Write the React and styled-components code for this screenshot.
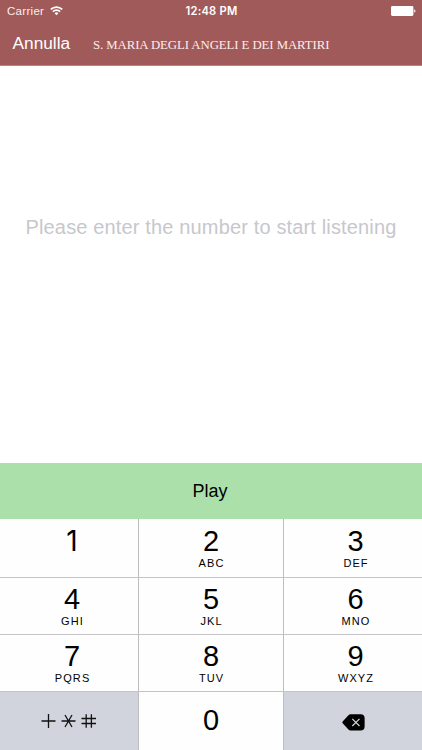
import React from "react";
import styled, { createGlobalStyle } from "styled-components";

const GlobalStyle = createGlobalStyle`
  *, *::before, *::after { box-sizing: border-box; }
  html, body { margin: 0; padding: 0; background: #fff; }
  button { border: 0; margin: 0; font: inherit; color: inherit; background: none; }
`;

const Screen = styled.div`
  width: 422px;
  height: 750px;
  display: flex;
  flex-direction: column;
  overflow: hidden;
  background: #fff;
  color: #000;
  font-family: "Liberation Sans", Arial, sans-serif;
`;

const Header = styled.header`
  height: 66px;
  flex: none;
  color: #fff;
  background: #a15a5a;
  border-bottom: 1px solid #b98484;
`;

const StatusBar = styled.div`
  height: 22px;
  display: grid;
  grid-template-columns: 1fr auto 1fr;
  align-items: center;
  padding: 0 6px 0 7px;
  font-size: 11.5px;
  line-height: 22px;
`;

const Carrier = styled.div`
  display: flex;
  align-items: center;
  gap: 6px;
  color: #fbeeee;
  letter-spacing: 0.3px;
`;

const Clock = styled.div`
  font-family: Inter, "Liberation Sans", sans-serif;
  font-weight: 600;
  font-size: 11.2px;
  letter-spacing: 0.2px;
`;

const BatterySlot = styled.div`
  display: flex;
  justify-content: flex-end;
`;

const NavBar = styled.nav`
  height: 43px;
  display: flex;
  align-items: center;
  padding-left: 12.5px;
`;

const CancelButton = styled.button`
  width: 80.5px;
  padding: 0;
  text-align: left;
  font-size: 17.3px;
  line-height: 43px;
`;

const Title = styled.h1`
  margin: 0;
  padding-top: 3px;
  font-family: "Liberation Serif", "Times New Roman", serif;
  font-size: 12.8px;
  font-weight: 400;
  line-height: 20px;
  letter-spacing: -0.08px;
  color: #ffecea;
  white-space: nowrap;
`;

const Entry = styled.main`
  flex: 1;
  padding-top: 148px;
  text-align: center;
  white-space: nowrap;
  font-size: 20px;
  line-height: 26px;
  letter-spacing: 0.15px;
  color: #c7c7cc;
`;

const PlayButton = styled.button`
  height: 56px;
  flex: none;
  padding: 0 2px 0 0;
  background: #abe0aa;
  font-size: 18px;
  line-height: 56px;
`;

const Keypad = styled.div`
  flex: none;
  display: grid;
  grid-template-columns: 139px 145px 138px;
  grid-template-rows: 59px 57px 57px 58px;
`;

const Key = styled.button`
  display: flex;
  flex-direction: column;
  align-items: center;
  padding: ${(p) => p.$top ?? 5}px 0 0 ${(p) => p.$shift}px;
  background: ${(p) => (p.$muted ? "#d1d4dc" : "#fefefe")};
  border-right: ${(p) => (p.$lastColumn ? 0 : 1)}px solid #bdbdbf;
  border-bottom: ${(p) => (p.$lastRow ? 0 : 1)}px solid #c4c4c6;
`;

const Digit = styled.span`
  font-family: ${(p) => (p.$plainOne ? "Inter, " : "")}"Liberation Sans", sans-serif;
  font-size: ${(p) => (p.$plainOne ? 28 : 29)}px;
  line-height: 33px;
`;

const Letters = styled.span`
  margin: -1px -1.1px 0 0;
  font-size: 11px;
  line-height: 12px;
  letter-spacing: 1.1px;
`;

const WifiIcon = () => (
  <svg width="13" height="10" viewBox="0 0 13 10" fill="none" stroke="#fff" strokeWidth="1.7">
    <path d="M.8 3.4a8.1 8.1 0 0 1 11.4 0" />
    <path d="M2.900 5.700a5.100 5.100 0 0 1 7.200 0" />
    <path d="M6.500 9.200 4.600 7.300a2.700 2.700 0 0 1 3.800 0Z" fill="#fff" stroke="none" />
  </svg>
);

const BatteryIcon = () => (
  <svg width="25" height="10" viewBox="0 0 25 10" fill="#fff">
    <rect x="0" y="0" width="22.4" height="10" rx="1.4" />
    <path d="M23.2 3.4c1.7.3 1.7 2.9 0 3.2Z" />
  </svg>
);

const SymbolsIcon = () => (
  <svg width="56" height="16" viewBox="0 0 56 16" fill="none" stroke="#111" strokeWidth="1.3">
    <path d="M.5 8h14M7.500 1v14" />
    <path d="M20.500 8h14M24 2l7 12M31 2l-7 12" />
    <path d="M40.500 5.500h14.500M40.500 10.500h14.500M45.200 1.300v13.500M50.400 1.300v13.500" />
  </svg>
);

const DeleteIcon = () => (
  <svg width="23" height="17" viewBox="0 0 23 17">
    <path d="M9 .3h9.600a4 4 0 0 1 4 4v8.200a4 4 0 0 1-4 4H9c-1.200 0-2-.4-2.800-1.200L.9 9.600c-.7-.8-.7-1.600 0-2.400L6.200 1.500C7 .7 7.800.3 9 .3Z" fill="#000" />
    <path d="m10.300 4.800 7.200 7.200m0-7.200-7.200 7.200" stroke="#d1d4dc" strokeWidth="1.200" />
  </svg>
);

const KEYS = [
  ["1", ""], ["2", "ABC"], ["3", "DEF"],
  ["4", "GHI"], ["5", "JKL"], ["6", "MNO"],
  ["7", "PQRS"], ["8", "TUV"], ["9", "WXYZ"],
];

const SHIFTS = [6, 0, 5];

export default function App() {
  return (
    <>
      <GlobalStyle />
      <Screen>
        <Header>
          <StatusBar>
            <Carrier>Carrier <WifiIcon /></Carrier>
            <Clock>12:48 PM</Clock>
            <BatterySlot><BatteryIcon /></BatterySlot>
          </StatusBar>
          <NavBar>
            <CancelButton>Annulla</CancelButton>
            <Title>S. MARIA DEGLI ANGELI E DEI MARTIRI</Title>
          </NavBar>
        </Header>
        <Entry>Please enter the number to start listening</Entry>
        <PlayButton>Play</PlayButton>
        <Keypad>
          {KEYS.map(([digit, letters], i) => (
            <Key key={digit} $top={i < 3 ? 6 : 5} $shift={SHIFTS[i % 3]} $lastColumn={i % 3 === 2}>
              <Digit $plainOne={digit === "1"}>{digit}</Digit>
              {letters && <Letters>{letters}</Letters>}
            </Key>
          ))}
          <Key $muted $lastRow $top={21} $shift={0} aria-label="Symbols"><SymbolsIcon /></Key>
          <Key $lastRow $top={12} $shift={0}><Digit>0</Digit></Key>
          <Key $muted $lastRow $lastColumn $top={22} $shift={0} aria-label="Delete"><DeleteIcon /></Key>
        </Keypad>
      </Screen>
    </>
  );
}
